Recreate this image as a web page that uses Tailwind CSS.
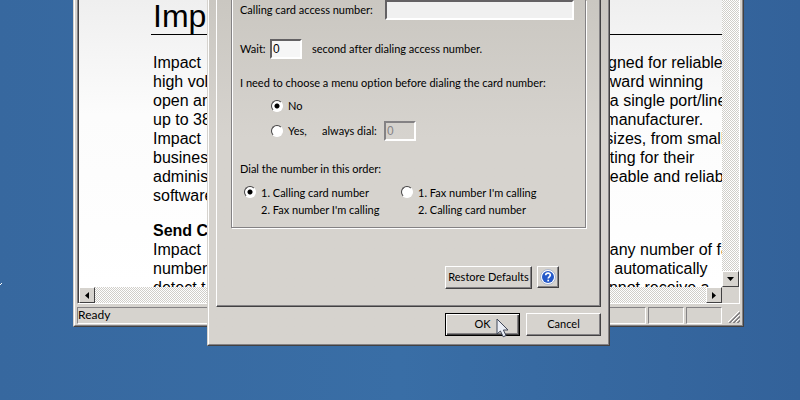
<!DOCTYPE html>
<html lang="en">
<head>
    <meta charset="UTF-8">
    <meta name="viewport" content="width=device-width, initial-scale=1.0">
    <title>Calling Card Setup</title>
    <script src="https://cdn.jsdelivr.net/npm/@tailwindcss/browser@4"></script>
</head>
<body class="relative min-h-screen overflow-hidden bg-linear-to-r from-[#37689f] via-[#396ea6] to-[#33629a] font-['Lato','Liberation_Sans',sans-serif] text-[11px] leading-4 text-black [font-variant-ligatures:none]">

    <!-- Desktop icon shadow at the screen edge -->
    <svg class="absolute left-0 top-[282px] size-1" viewBox="0 0 4 4" aria-hidden="true"><path d="M0 3L2 1" stroke="#fff"/></svg>

    <!-- Document window -->
    <main class="absolute left-[73px] top-0 w-[671px] border-x border-b border-l-[#d6d3ce] border-r-[#424142] border-b-[#424142] bg-[#d6d3ce]">
        <div class="border-x border-b border-l-white border-r-[#848284] border-b-[#848284] px-[2px] pb-px">
            <div class="border-x border-b border-l-[#848284] border-r-white border-b-white">
                <div class="grid grid-cols-[1fr_17px] border-l border-l-[#424142]">
                    <article class="h-[287px] overflow-hidden bg-linear-to-b from-[#efefef] via-[#fcfcfc] via-40% to-white pl-[72px] font-['Liberation_Sans',sans-serif] text-[16px] leading-[19px]">
                        <h1 class="h-[35px] border-b border-black pl-[2px] text-[32px] leading-8">Imp</h1>
                        <div class="mt-[18px] grid grid-cols-[439px_1fr] whitespace-pre pl-[2px]">
                            <p>Impact
high vol
open an
up to 38
Impact
busines
adminis
software</p>
                            <p> signed for reliable
  award winning
    a single port/line
   manufacturer.
   sizes, from small
 etting for their
ageable and reliable</p>
                        </div>
                        <h2 class="mt-4 pl-[2px] font-bold">Send C</h2>
                        <div class="grid grid-cols-[439px_1fr] whitespace-pre pl-[2px]">
                            <p>Impact
number
detect t</p>
                            <p>    any number of fax
     automatically
cannot receive a</p>
                        </div>
                    </article>
                    <div class="flex flex-col justify-end bg-[repeating-conic-gradient(#ffffff_0_25%,#d0cec9_0_50%)] bg-[length:2px_2px]">
                        <button class="flex h-4 items-center justify-center border border-b-[#424142] border-l-white border-r-[#424142] border-t-white bg-[#d6d3ce]" aria-label="Scroll down">
                            <svg class="h-1 w-[7px]" viewBox="0 0 7 4"><path d="M0 0h7L3.5 4z"/></svg>
                        </button>
                    </div>
                    <div class="flex h-4 justify-between bg-[repeating-conic-gradient(#ffffff_0_25%,#d0cec9_0_50%)] bg-[length:2px_2px]">
                        <button class="flex w-4 items-center justify-center border border-b-[#424142] border-l-white border-r-[#424142] border-t-white bg-[#d6d3ce]" aria-label="Scroll left">
                            <svg class="h-[7px] w-1" viewBox="0 0 4 7"><path d="M4 0v7L0 3.5z"/></svg>
                        </button>
                        <button class="flex w-4 items-center justify-center border border-b-[#424142] border-l-white border-r-[#424142] border-t-white bg-[#d6d3ce]" aria-label="Scroll right">
                            <svg class="h-[7px] w-1" viewBox="0 0 4 7"><path d="M0 0v7L4 3.5z"/></svg>
                        </button>
                    </div>
                </div>
            </div>
            <footer class="mt-[3px] flex h-[17px] gap-[2px]">
                <p class="flex-1 border border-b-white border-l-[#848284] border-r-white border-t-[#848284] text-[12px] leading-[14px]">Ready</p>
                <div class="w-9 border border-b-white border-l-[#848284] border-r-white border-t-[#848284]"></div>
                <div class="w-9 border border-b-white border-l-[#848284] border-r-white border-t-[#848284]"></div>
                <svg class="ml-1 mt-1 size-3" viewBox="0 0 12 12" fill="none" aria-hidden="true">
                    <path d="M0 11L11 0M4 11L11 4M8 11L11 8" stroke="#fff"/>
                    <path d="M1 12L12 1M2 12L12 2M5 12L12 5M6 12L12 6M9 12L12 9M10 12L12 10" stroke="#848284"/>
                </svg>
            </footer>
        </div>
    </main>

    <!-- Calling card dialog -->
    <form class="absolute left-[207px] top-0 w-[403px] border-x border-b border-l-[#d6d3ce] border-r-[#424142] border-b-[#424142]">
        <div class="border-x border-b border-l-white border-r-[#848284] border-b-[#848284] bg-linear-to-b from-[#cac7c1] to-[#d6d3ce] to-40% px-[7px] pb-2">
            <div class="border-x border-b border-l-white border-r-[#424142] border-b-[#424142]">
                <div class="border-b border-r border-[#848284] pb-4 pl-[14px] pr-[13px]">
                    <fieldset class="border-x border-b border-[#848284] shadow-[1px_1px_0_#fff,inset_1px_0_0_#fff]">
                        <div class="px-2 pb-[9px]">
                            <div class="flex h-5 items-center justify-between pr-[3px]">
                                <label for="access">Calling card access number:</label>
                                <input id="access" type="text" class="h-5 w-[189px] border-2 border-b-white border-l-[#636163] border-r-white border-t-[#636163] bg-[#f0f0f0] px-1">
                            </div>
                            <div class="mt-[19px] flex h-5 items-center">
                                <label for="wait" class="w-[30px]">Wait:</label>
                                <input id="wait" type="text" value="0" class="h-5 w-8 border-2 border-b-white border-l-[#636163] border-r-white border-t-[#636163] bg-[#f6f6f6] px-px font-['Liberation_Sans',sans-serif] text-[12px]">
                                <span class="ml-[10px]">second after dialing access number.</span>
                            </div>
                            <p class="mt-4">I need to choose a menu option before dialing the card number:</p>
                            <div class="mt-[7px] flex h-4 items-center gap-[5px] pl-[31px]">
                                <input id="no" name="menu" type="radio" checked class="size-3 appearance-none rounded-full border border-b-white border-l-[#424142] border-r-white border-t-[#424142] bg-white checked:bg-[radial-gradient(circle,#000_2px,#fff_3px)]">
                                <label for="no">No</label>
                            </div>
                            <div class="mt-[7px] flex h-5 items-center pl-[31px]">
                                <input id="yes" name="menu" type="radio" class="size-3 appearance-none rounded-full border border-b-white border-l-[#424142] border-r-white border-t-[#424142] bg-white checked:bg-[radial-gradient(circle,#000_2px,#fff_3px)]">
                                <label for="yes" class="ml-[5px] w-[34px]">Yes,</label>
                                <label for="dial" class="w-[62px]">always dial:</label>
                                <input id="dial" type="text" value="0" disabled class="h-5 w-8 border-2 border-b-white border-l-[#848284] border-r-white border-t-[#848284] px-px font-['Liberation_Sans',sans-serif] text-[12px] text-[#848284]">
                            </div>
                            <p class="mt-5">Dial the number in this order:</p>
                            <div class="mt-[7px] grid grid-cols-[157px_1fr] pl-1">
                                <div class="flex gap-[5px]">
                                    <input id="cardFirst" name="order" type="radio" checked class="mt-[2px] size-3 appearance-none rounded-full border border-b-white border-l-[#424142] border-r-white border-t-[#424142] bg-white checked:bg-[radial-gradient(circle,#000_2px,#fff_3px)]">
                                    <label for="cardFirst" class="leading-[17px]">1. Calling card number<br>2. Fax number I'm calling</label>
                                </div>
                                <div class="flex gap-[5px]">
                                    <input id="faxFirst" name="order" type="radio" class="mt-[2px] size-3 appearance-none rounded-full border border-b-white border-l-[#424142] border-r-white border-t-[#424142] bg-white checked:bg-[radial-gradient(circle,#000_2px,#fff_3px)]">
                                    <label for="faxFirst" class="leading-[17px]">1. Fax number I'm calling<br>2. Calling card number</label>
                                </div>
                            </div>
                        </div>
                    </fieldset>
                    <div class="mt-[38px] flex justify-end gap-[5px] pr-[27px]">
                        <button type="button" class="h-[23px] w-[87px] whitespace-nowrap border border-b-[#424142] border-l-white border-r-[#424142] border-t-white pb-px shadow-[inset_-1px_-1px_0_#848284]">Restore Defaults</button>
                        <button type="button" class="flex size-[22px] items-center justify-center border border-b-[#424142] border-l-white border-r-[#424142] border-t-white shadow-[inset_-1px_-1px_0_#848284]" aria-label="Help">
                            <svg class="size-4" viewBox="0 0 16 16" fill="none">
                                <circle cx="8" cy="8" r="7.5" fill="#fff" stroke="#a9b4cc"/>
                                <circle cx="8" cy="8" r="6" fill="#2559c9"/>
                                <path d="M5.7 6.3C5.8 3.4 10.3 3.5 10.3 6.1C10.3 7.8 8.2 7.8 8.2 9.6" stroke="#fff" stroke-width="1.7"/>
                                <path d="M8.2 10.7v1.7" stroke="#fff" stroke-width="1.7"/>
                            </svg>
                        </button>
                    </div>
                </div>
            </div>
            <div class="mt-[6px] flex justify-end gap-[6px]">
                <div class="relative">
                    <button type="submit" class="h-[23px] w-[75px] border border-black pb-px shadow-[inset_1px_1px_0_#fff,inset_-1px_-1px_0_#424142,inset_-2px_-2px_0_#848284]">OK</button>
                    <svg class="absolute left-[51px] top-[5px] h-5 w-[13px]" viewBox="0 0 13 20" aria-hidden="true">
                        <path d="M1 1V16L4.4 13L7.2 18.8L10 17.5L7.4 12H12z" fill="#e9edf5" stroke="#3f4658"/>
                    </svg>
                </div>
                <button type="button" class="h-[23px] w-[75px] border border-b-[#424142] border-l-white border-r-[#424142] border-t-white pb-px shadow-[inset_-1px_-1px_0_#848284]">Cancel</button>
            </div>
        </div>
    </form>
</body>
</html>
